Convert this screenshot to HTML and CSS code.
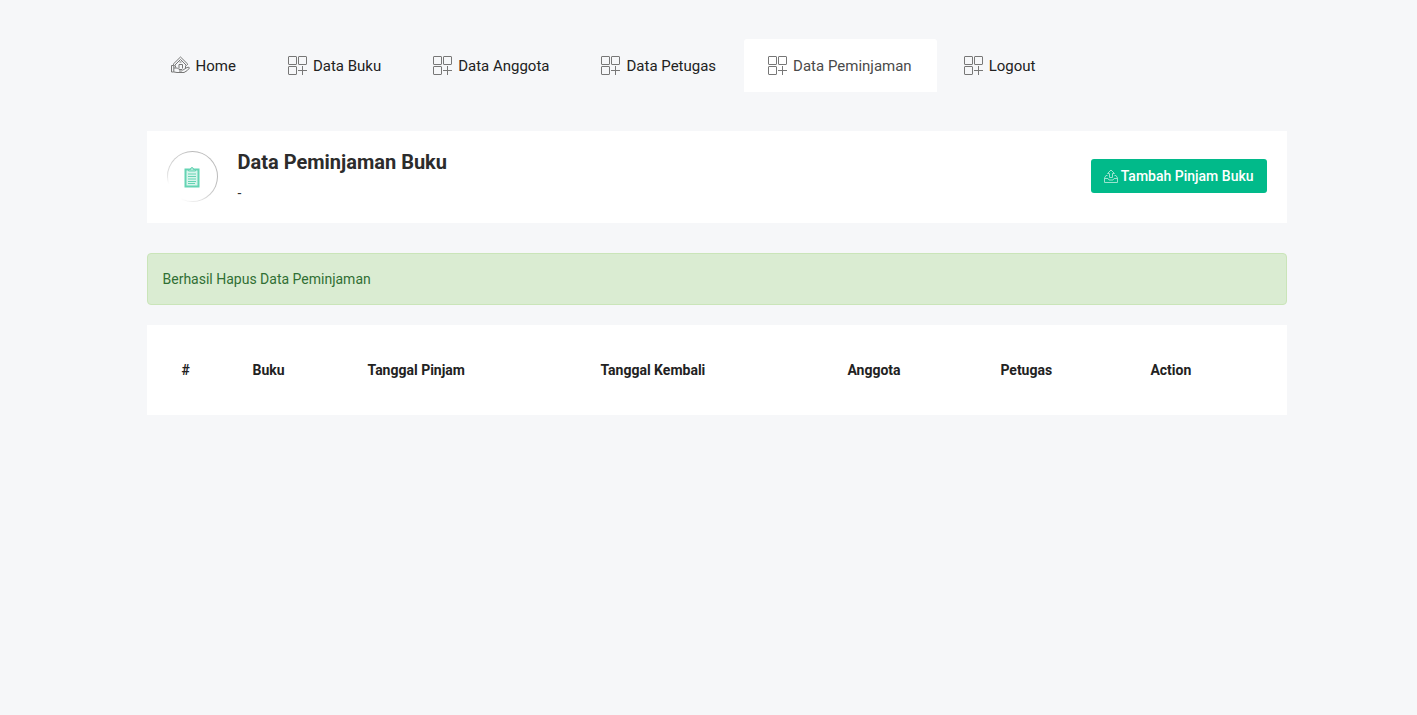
FILE: index.html
```html
<!DOCTYPE html>
<html lang="id">
<head>
<meta charset="utf-8">
<meta name="viewport" content="width=device-width, initial-scale=1">
<title>Data Peminjaman Buku</title>
<link rel="stylesheet" href="styles.css">
</head>
<body>
<svg class="sprite" aria-hidden="true">
  <symbol id="apps" viewBox="0 0 20 20"><rect x="1.500" y="1.500" width="8" height="8" rx=".5"/><rect x="11.500" y="1.500" width="8" height="8" rx=".5"/><rect x="1.500" y="11.500" width="8" height="8" rx=".5"/><path d="M15.500 11v9M11 15.500h9"/></symbol>
  <symbol id="house" viewBox="0 0 20 20"><path d="M3.200 9.200 10.500 2l7.300 7.200-1.300 1.300-6-6-6 6zM5.500 10.500v2M15.500 10.500V13M9 13.500v-4h3.500v4M9.500 7h2"/><path d="M1.500 10.500h2.300V17H1.500zM4 13h3.500l1.500 1.500h3q1 1-.5 1.500H9M13 15l4-2.500q2.500-.8 2.500.5-2 3-5.500 4.500H7L4 17"/></symbol>
  <symbol id="clipboard" viewBox="0 0 16 22"><path class="board" d="M1.500 3.500h13v17h-13z"/><path class="lines" d="M4 8h8M4 10.500h8M4 13h8M4 15.500h8M4 17.500h7"/><path class="clip" d="M4.500 5V3.500h2q0-2 1.500-2t1.500 2h2V5z"/></symbol>
  <symbol id="upload" viewBox="0 0 14 14"><path d="M3.500 6.500H2L.5 9v4.500h13V9L12 6.500h-1.500M.5 9.500H4l1 1.500h4l1-1.500h3.500M5.500 8.500v-4h-2L7 1l3.500 3.500h-2v4z"/></symbol>
</svg>
<div class="container">
  <nav class="menu">
    <a class="menu-link" href="#"><svg class="menu-icon"><use href="#house"/></svg>Home</a>
    <a class="menu-link" href="#"><svg class="menu-icon"><use href="#apps"/></svg>Data Buku</a>
    <a class="menu-link" href="#"><svg class="menu-icon"><use href="#apps"/></svg>Data Anggota</a>
    <a class="menu-link" href="#"><svg class="menu-icon"><use href="#apps"/></svg>Data Petugas</a>
    <a class="menu-link active" href="#" aria-current="page"><svg class="menu-icon"><use href="#apps"/></svg>Data Peminjaman</a>
    <a class="menu-link" href="#"><svg class="menu-icon"><use href="#apps"/></svg>Logout</a>
  </nav>
  <main>
    <header class="card page-head">
      <div class="badge"><svg class="badge-icon"><use href="#clipboard"/></svg></div>
      <div class="heading"><h1>Data Peminjaman Buku</h1><p>-</p></div>
      <button class="button" type="button"><svg class="button-icon"><use href="#upload"/></svg>Tambah Pinjam Buku</button>
    </header>
    <div class="alert" role="status">Berhasil Hapus Data Peminjaman</div>
    <section class="card">
      <table class="loans">
        <colgroup><col class="c-num"><col class="c-book"><col class="c-start"><col class="c-end"><col class="c-member"><col class="c-staff"><col></colgroup>
        <thead><tr><th>#</th><th>Buku</th><th>Tanggal Pinjam</th><th>Tanggal Kembali</th><th>Anggota</th><th>Petugas</th><th>Action</th></tr></thead>
        <tbody></tbody>
      </table>
    </section>
  </main>
</div>
</body>
</html>
```
FILE: styles.css
```css
* { box-sizing: border-box; }
body {
  margin: 0;
  padding: 39px 16px 24px 32px;
  background: #f6f7f9;
  color: #303030;
  font: 14px/20px Roboto, sans-serif;
}
.sprite { display: none; }
.container { max-width: 1140px; margin: 0 auto; }
.menu { display: flex; flex-wrap: wrap; gap: 3px; margin-bottom: 39px; }
.menu-link {
  display: flex;
  align-items: flex-start;
  gap: 6px;
  padding: 16px 25px 14px 23px;
  border-radius: 3px 3px 0 0;
  color: #222;
  font-size: 15px;
  line-height: 23px;
  text-decoration: none;
}
.menu-link.active { background: #fff; color: #4a4a4a; }
.menu-icon { width: 20px; height: 20px; fill: none; stroke: #777; stroke-width: 1; }
.card { padding: 20px; background: #fff; }
.page-head { display: flex; align-items: center; gap: 20px; margin-bottom: 30px; }
.badge {
  display: flex;
  align-items: center;
  justify-content: center;
  align-self: flex-start;
  width: 51px;
  height: 51px;
  border: 1px solid transparent;
  border-radius: 50%;
  background: linear-gradient(#fff, #fff) padding-box, conic-gradient(from 180deg, #eee 0%, #fff 8%, #fff 20%, #ddd 27%, #bbb 50%, #bbb 80%, #eee 100%) border-box;
}
.badge-icon { width: 16px; height: 22px; fill: none; stroke: #65d4b3; }
.board { fill: #d8f5ec; stroke-width: 2; }
.clip { fill: #b4eada; }
.heading { flex: 1; }
.heading h1 { margin: 0 0 10px; font-size: 20px; line-height: 22px; font-weight: 700; color: #2c2c2c; }
.heading p { margin: 0; }
.button {
  display: flex;
  align-items: center;
  gap: 3px;
  margin-bottom: 2px;
  padding: 7px 13px;
  border: 0;
  border-radius: 3px;
  background: #01ba8a;
  color: #fff;
  font: 500 14px/20px Roboto, sans-serif;
  cursor: pointer;
}
.button-icon { width: 14px; height: 14px; fill: none; stroke: #9be3cf; }
.alert {
  margin-bottom: 20px;
  padding: 15px;
  border: 1px solid #cae5b9;
  border-radius: 4px;
  background: #daecd2;
  color: #306f34;
}
.loans { width: 100%; table-layout: fixed; border-collapse: collapse; }
.loans th { padding: 15px; font-weight: 700; text-align: left; color: #222; }
.c-num { width: 6.46%; }
.c-book { width: 10.45%; }
.c-start { width: 21.18%; }
.c-end { width: 22.45%; }
.c-member { width: 13.91%; }
.c-staff { width: 13.64%; }
```
